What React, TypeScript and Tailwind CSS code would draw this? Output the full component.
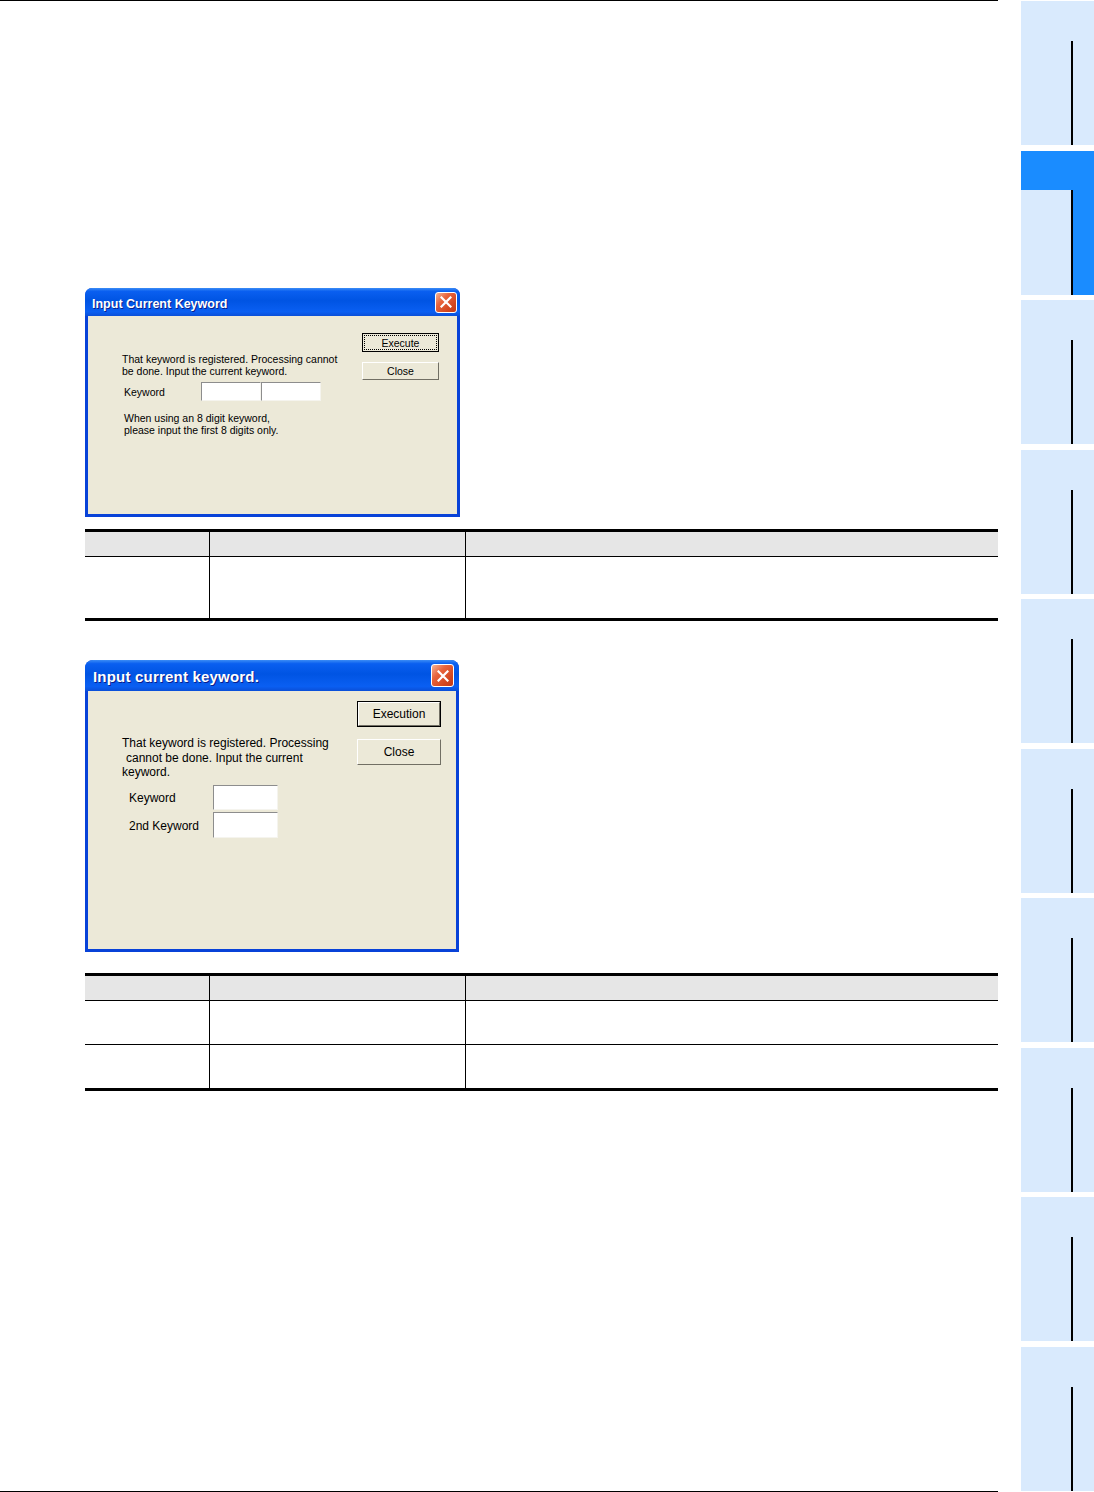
import React from 'react';

const light = 'bg-[#d9eafd]';

function SideTab({ active }: { active?: boolean }) {
  return (
    <div className="h-[144px] flex flex-col">
      <div className={active ? 'h-[39px] bg-[#1a8cff]' : 'h-[40px] bg-[#d9eafd]'} />
      <div className="flex-1 flex">
        <div className={`w-[50px] ${light}`} />
        <div className="w-[2px] bg-black" />
        <div className={active ? 'flex-1 bg-[#1a8cff]' : 'flex-1 bg-[#d9eafd]'} />
      </div>
    </div>
  );
}

function CloseX({ size }: { size: 'sm' | 'lg' }) {
  return (
    <div
      className={
        size === 'sm'
          ? 'w-[22px] h-[21px] rounded-[3px] border border-white flex items-center justify-center bg-[linear-gradient(135deg,#f6b497_0%,#e8643c_35%,#d2461f_75%,#c23a18_100%)]'
          : 'w-[23px] h-[23px] rounded-[3px] border border-white flex items-center justify-center bg-[linear-gradient(135deg,#f6b497_0%,#e8643c_35%,#d2461f_75%,#c23a18_100%)]'
      }
    >
      <svg width="12" height="12" viewBox="0 0 12 12">
        <path d="M1.5 1.5 L10.5 10.5 M10.5 1.5 L1.5 10.5" stroke="white" strokeWidth="2.2" strokeLinecap="square" />
      </svg>
    </div>
  );
}

const titleBg =
  'bg-[linear-gradient(to_bottom,#3b8cf5_0%,#0a5ff0_12%,#0054e3_45%,#0a5ff2_85%,#0a4fd8_100%)]';

function XpInput({ w, h }: { w: string; h: string }) {
  return (
    <div
      className={`${w} ${h} bg-white border border-t-[#8d8d8d] border-l-[#8d8d8d] border-b-[#f5f4ee] border-r-[#f5f4ee]`}
    />
  );
}

function TableBlock({ rows }: { rows: number[] }) {
  return (
    <div className="ml-[85px] w-[913px] border-t-[3px] border-b-[3px] border-black">
      <div className="grid grid-cols-[124px_256px_1fr] h-[25px] bg-[#e6e6e6] border-b border-black">
        <div />
        <div className="border-l border-black" />
        <div className="border-l border-black" />
      </div>
      {rows.map((h, i) => (
        <div
          key={i}
          className={
            i < rows.length - 1
              ? 'grid grid-cols-[124px_256px_1fr] border-b border-black'
              : 'grid grid-cols-[124px_256px_1fr]'
          }
          style={{ height: h }}
        >
          <div />
          <div className="border-l border-black" />
          <div className="border-l border-black" />
        </div>
      ))}
    </div>
  );
}

function DialogOne() {
  return (
    <div className="ml-[85px] w-[375px] h-[229px] flex flex-col bg-[#0842d8] rounded-t-[7px] overflow-hidden">
      <div className={`h-[28px] ${titleBg} flex items-center pl-[7px] pr-[3px]`}>
        <span className="pt-[5px] text-white font-bold text-[12.5px] [text-shadow:1px_1px_0_#0a1e8c] [font-family:'Liberation_Sans',Arial,sans-serif]">
          Input Current Keyword
        </span>
        <div className="ml-auto">
          <CloseX size="sm" />
        </div>
      </div>
      <div className="flex-1 mx-[3px] mb-[3px] bg-[#ece9d8] flex text-[10.5px] leading-[12px] text-black [font-family:'Liberation_Sans',Arial,sans-serif]">
        <div className="ml-[34px] mt-[37px] flex flex-col">
          <p>That keyword is registered. Processing cannot</p>
          <p>be done. Input the current keyword.</p>
          <div className="mt-[5px] flex items-center">
            <span className="ml-[2px] w-[77px] pt-[1px]">Keyword</span>
            <XpInput w="w-[60px]" h="h-[19px]" />
            <XpInput w="w-[60px]" h="h-[19px]" />
          </div>
          <p className="mt-[11px] ml-[2px]">When using an 8 digit keyword,</p>
          <p className="ml-[2px]">please input the first 8 digits only.</p>
        </div>
        <div className="ml-auto mr-[18px] mt-[17px] flex flex-col gap-[10px]">
          <div className="w-[77px] h-[19px] border border-black bg-[#ece9d8] p-[1px]">
            <div className="w-full h-full border border-dotted border-black flex items-center justify-center">
              Execute
            </div>
          </div>
          <div className="w-[77px] h-[18px] border border-t-white border-l-white border-b-[#716f64] border-r-[#716f64] bg-[#ece9d8] flex items-center justify-center">
            Close
          </div>
        </div>
      </div>
    </div>
  );
}

function DialogTwo() {
  return (
    <div className="ml-[85px] w-[374px] h-[292px] flex flex-col bg-[#0842d8] rounded-t-[8px] overflow-hidden">
      <div className={`h-[31px] ${titleBg} flex items-center pl-[8px] pr-[5px]`}>
        <span className="pt-[4px] text-white font-bold text-[15px] tracking-[0.2px] [text-shadow:1px_1px_0_#0a1e8c] [font-family:'Liberation_Sans',Arial,sans-serif]">
          Input current keyword.
        </span>
        <div className="ml-auto">
          <CloseX size="lg" />
        </div>
      </div>
      <div className="flex-1 mx-[3px] mb-[3px] bg-[#ece9d8] flex text-[12px] leading-[14.5px] text-black [font-family:'Liberation_Sans',Arial,sans-serif]">
        <div className="ml-[34px] mt-[45px] flex flex-col">
          <p>That keyword is registered. Processing</p>
          <p className="pl-[4px]">cannot be done. Input the current</p>
          <p>keyword.</p>
          <div className="mt-[5px] flex items-center">
            <span className="ml-[7px] w-[84px] pt-[3px]">Keyword</span>
            <XpInput w="w-[65px]" h="h-[25px]" />
          </div>
          <div className="mt-[2px] flex items-center">
            <span className="ml-[7px] w-[84px] pt-[3px]">2nd Keyword</span>
            <XpInput w="w-[65px]" h="h-[26px]" />
          </div>
        </div>
        <div className="ml-auto mr-[15px] mt-[10px] flex flex-col gap-[12px]">
          <div className="w-[84px] h-[26px] border border-black bg-[#ece9d8] flex items-center justify-center">
            <div className="w-full h-full border border-t-white border-l-white border-b-[#716f64] border-r-[#716f64] flex items-center justify-center">
              Execution
            </div>
          </div>
          <div className="w-[84px] h-[26px] border border-t-white border-l-white border-b-[#716f64] border-r-[#716f64] bg-[#ece9d8] flex items-center justify-center">
            Close
          </div>
        </div>
      </div>
    </div>
  );
}

export default function App() {
  return (
    <div className="w-[1094px] h-[1492px] bg-white flex overflow-hidden">
      {/* Page body */}
      <div className="w-[998px] h-full flex flex-col">
        <div className="h-[1px] bg-black" />
        <div className="mt-[287px]">
          <DialogOne />
        </div>
        <div className="mt-[12px]">
          <TableBlock rows={[61]} />
        </div>
        <div className="mt-[39px]">
          <DialogTwo />
        </div>
        <div className="mt-[21px]">
          <TableBlock rows={[44, 43]} />
        </div>
        <div className="flex-1" />
        <div className="h-[1px] bg-black" />
      </div>

      {/* Chapter tabs */}
      <div className="ml-[23px] w-[73px] pt-[1px] flex flex-col gap-[5.5px]">
        {Array.from({ length: 10 }).map((_, i) => (
          <SideTab key={i} active={i === 1} />
        ))}
      </div>
    </div>
  );
}
